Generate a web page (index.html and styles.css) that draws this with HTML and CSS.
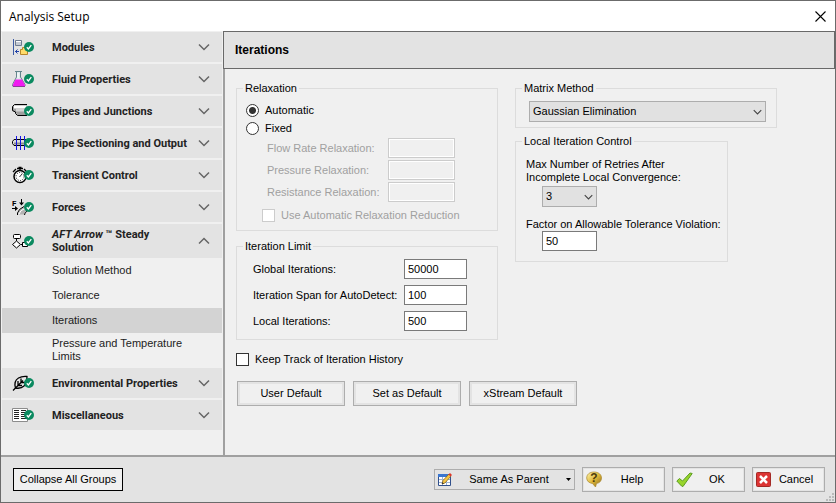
FILE: index.html
```html
<!DOCTYPE html>
<html lang="en">
<head>
    <meta charset="UTF-8">
    <meta name="viewport" content="width=device-width, initial-scale=1.0">
    <title>Analysis Setup</title>
    <link rel="stylesheet" href="styles.css">
</head>
<body>
    <svg class="defs" aria-hidden="true">
        <symbol id="check" viewBox="0 0 10 10">
            <circle cx="5" cy="5" r="5" fill="#0b8a60"/>
            <path d="M2.8 5.2l1.6 1.7 2.9-3.8" fill="none" stroke="#fff" stroke-width="1.3"/>
        </symbol>
        <symbol id="chevron" viewBox="0 0 12 8">
            <path d="M1 1.5l5 5 5-5" fill="none" stroke="currentColor" stroke-width="1.5"/>
        </symbol>
    </svg>

    <div class="window">
        <header class="title-bar">
            <span>Analysis Setup</span>
            <button class="close-button" aria-label="Close">
                <svg width="11" height="11" viewBox="0 0 11 11"><path d="M.5.5l10 10M10.5.5l-10 10" stroke="#000" stroke-width="1.1"/></svg>
            </button>
        </header>

        <div class="window-body">
            <nav class="sidebar">
                <button class="group">
                    <svg class="group-icon" viewBox="0 0 24 18">
                        <path d="M2.5 1v16" stroke="#3c5ba5"/>
                        <path d="M4.5 2.5h6v5h-6z" fill="#c4cad4" stroke="#6e7b90"/>
                        <path d="M5 3.5h5" stroke="#fff"/>
                        <path d="M9.5 16.5v-5h2v-2h5v7z" fill="#ffdc6a" stroke="#b8862b"/>
                        <path d="M4 13.5h4M6.5 11.5l-2 2 2 2" fill="none" stroke="#2142a8"/>
                        <use href="#check" x="13" y="4" width="10" height="10"/>
                    </svg>
                    <span class="group-name">Modules</span>
                    <svg class="chevron"><use href="#chevron"/></svg>
                </button>
                <button class="group">
                    <svg class="group-icon" viewBox="0 0 24 18">
                        <path d="M5.5 2v5L1.5 14.5V16H14v-1.500L9.500 7V2" fill="#dfe9ec" stroke="#64858c"/>
                        <path d="M4.5 9.5H11l3 5.500v1H1.800v-1z" fill="#f01cf0"/>
                        <path d="M4 1.5h7" stroke="#64858c"/>
                        <path d="M7 3v5" stroke="#fff"/>
                        <path d="M2 16.5h12" stroke="#8a3c96"/>
                        <use href="#check" x="13" y="4" width="10" height="10"/>
                    </svg>
                    <span class="group-name">Fluid Properties</span>
                    <svg class="chevron"><use href="#chevron"/></svg>
                </button>
                <button class="group">
                    <svg class="group-icon" viewBox="0 0 24 18">
                        <path d="M1.5 4.5l2-2h12v11h-9l-2-3-3-1z" fill="#a0a0a0"/>
                        <path d="M3 3.5h12v3H3z" fill="#fff"/>
                        <path d="M5 6.5h11v3H5z" fill="#d4d4d4"/>
                        <path d="M16 2.5H3.5l-2 2v4l3 1.500v1.500l2 2H16" fill="none" stroke="#000"/>
                        <use href="#check" x="13" y="4" width="10" height="10"/>
                    </svg>
                    <span class="group-name">Pipes and Junctions</span>
                    <svg class="chevron"><use href="#chevron"/></svg>
                </button>
                <button class="group">
                    <svg class="group-icon" viewBox="0 0 24 18">
                        <path d="M3 5.5h13v6H3l-1.500-2v-2z" fill="#ddd" stroke="#000"/>
                        <path d="M3 8.5h13v2H3z" fill="#8c8c8c"/>
                        <path d="M5.5 2v14M9.5 2v14M13.5 2v14" stroke="#1414e6"/>
                        <use href="#check" x="13" y="4" width="10" height="10"/>
                    </svg>
                    <span class="group-name">Pipe Sectioning and Output</span>
                    <svg class="chevron"><use href="#chevron"/></svg>
                </button>
                <button class="group">
                    <svg class="group-icon" viewBox="0 0 24 18">
                        <circle cx="9" cy="10.5" r="6" fill="#fff" stroke="#000" stroke-width="1.5"/>
                        <circle cx="9" cy="10.5" r="4" fill="none" stroke="#000" stroke-dasharray="1 1.5"/>
                        <path d="M6 2.5h6M7.5 1.5h3M9 3v2M2 6l3-3M13 3l3 3" stroke="#000" stroke-width="1.3"/>
                        <path d="M8.5 11l2.500-3" stroke="#333"/>
                        <use href="#check" x="13" y="4" width="10" height="10"/>
                    </svg>
                    <span class="group-name">Transient Control</span>
                    <svg class="chevron"><use href="#chevron"/></svg>
                </button>
                <button class="group">
                    <svg class="group-icon" viewBox="0 0 24 18">
                        <text class="force-letter" x="1" y="8">F</text>
                        <path d="M10.5 1v5M1 10.5h4" stroke="#000"/>
                        <path d="M8 4.5h5l-2.500 3zM4 8l3 2.500L4 13z" fill="#000"/>
                        <path d="M7.5 16.5v-2q1-4 6.500-5.500l3 3q-4 1-4 4.500z" fill="#b4b4b4"/>
                        <path d="M8 16q1-4 6-5.500" fill="none" stroke="#fff"/>
                        <path d="M6.5 17v-2q1-4 6.500-6.500M13.500 17q0-3 3-4" fill="none" stroke="#000"/>
                        <use href="#check" x="13" y="4" width="10" height="10"/>
                    </svg>
                    <span class="group-name">Forces</span>
                    <svg class="chevron"><use href="#chevron"/></svg>
                </button>
                <button class="group group-open" aria-expanded="true">
                    <svg class="group-icon" viewBox="0 0 24 18">
                        <rect x="2.5" y="2.5" width="7" height="4" rx="1" fill="#fff" stroke="#000"/>
                        <path d="M5.5 7v2M10 12.5h2" stroke="#000"/>
                        <path d="M5.5 9l4 3.500-4 3.500-4-3.500z" fill="#fff" stroke="#000"/>
                        <path d="M11.5 10.5h5v4h-5z" fill="#fff" stroke="#000"/>
                        <use href="#check" x="13" y="4" width="10" height="10"/>
                    </svg>
                    <span class="group-name"><i>AFT Arrow</i> ™ Steady<br>Solution</span>
                    <svg class="chevron chevron-up"><use href="#chevron"/></svg>
                </button>
                <ul class="pages">
                    <li><a class="page" href="#">Solution Method</a></li>
                    <li><a class="page" href="#">Tolerance</a></li>
                    <li><a class="page page-current" href="#" aria-current="page">Iterations</a></li>
                    <li><a class="page page-long" href="#">Pressure and Temperature Limits</a></li>
                </ul>
                <button class="group">
                    <svg class="group-icon" viewBox="0 0 24 18">
                        <path d="M4.5 14Q2.5 7 7.5 4 11 2 16 2.5q0 6-3 9.500-3 3-8.500 2z" fill="#e6e6e6" stroke="#000" stroke-width="1.3"/>
                        <path d="M2 16.5l3-3 7-7M7 7v4.500h4M10 4.500v4h4" fill="none" stroke="#000" stroke-width="1.3"/>
                        <use href="#check" x="13" y="4" width="10" height="10"/>
                    </svg>
                    <span class="group-name">Environmental Properties</span>
                    <svg class="chevron"><use href="#chevron"/></svg>
                </button>
                <button class="group">
                    <svg class="group-icon" viewBox="0 0 24 18">
                        <path d="M1.5 2.5h15v13h-15z" fill="#fff" stroke="#8c8c8c"/>
                        <path d="M3 4.5h5M3 6.5h5M3 8.5h5M3 10.5h5M3 12.5h5M10 4.5h5M10 6.5h5M10 8.5h5M10 10.5h5M10 12.5h5" stroke="#222"/>
                        <use href="#check" x="13" y="4" width="10" height="10"/>
                    </svg>
                    <span class="group-name">Miscellaneous</span>
                    <svg class="chevron"><use href="#chevron"/></svg>
                </button>
            </nav>

            <main class="content">
                <h1 class="page-title">Iterations</h1>
                <div class="settings">
                    <div class="column">
                        <fieldset class="relaxation">
                            <legend>Relaxation</legend>
                            <label class="option"><input type="radio" name="relaxation" checked> Automatic</label>
                            <label class="option"><input type="radio" name="relaxation"> Fixed</label>
                            <div class="fixed-values">
                                <label for="flow-rate">Flow Rate Relaxation:</label>
                                <input id="flow-rate" type="text" disabled>
                                <label for="pressure">Pressure Relaxation:</label>
                                <input id="pressure" type="text" disabled>
                                <label for="resistance">Resistance Relaxation:</label>
                                <input id="resistance" type="text" disabled>
                            </div>
                            <label class="option option-disabled"><input type="checkbox" disabled> Use Automatic Relaxation Reduction</label>
                        </fieldset>

                        <fieldset class="limits">
                            <legend>Iteration Limit</legend>
                            <div class="limit-values">
                                <label for="global">Global Iterations:</label>
                                <input id="global" type="text" value="50000">
                                <label for="span">Iteration Span for AutoDetect:</label>
                                <input id="span" type="text" value="100">
                                <label for="local">Local Iterations:</label>
                                <input id="local" type="text" value="500">
                            </div>
                        </fieldset>

                        <label class="option history"><input type="checkbox"> Keep Track of Iteration History</label>

                        <div class="defaults">
                            <button class="button">User Default</button>
                            <button class="button">Set as Default</button>
                            <button class="button">xStream Default</button>
                        </div>
                    </div>

                    <div class="column">
                        <fieldset class="matrix">
                            <legend>Matrix Method</legend>
                            <div class="select-box">
                                <select aria-label="Matrix Method">
                                    <option>Gaussian Elimination</option>
                                </select>
                                <svg class="chevron"><use href="#chevron"/></svg>
                            </div>
                        </fieldset>

                        <fieldset class="local-control">
                            <legend>Local Iteration Control</legend>
                            <label for="retries">Max Number of Retries After<br>Incomplete Local Convergence:</label>
                            <div class="select-box">
                                <select id="retries">
                                    <option>3</option>
                                </select>
                                <svg class="chevron"><use href="#chevron"/></svg>
                            </div>
                            <label for="factor">Factor on Allowable Tolerance Violation:</label>
                            <input id="factor" type="text" value="50">
                        </fieldset>
                    </div>
                </div>
            </main>
        </div>

        <footer class="actions">
            <button class="collapse-button">Collapse All Groups</button>
            <button class="action same-button">
                <svg width="14" height="14" viewBox="0 0 14 14">
                    <path d="M.5 2.5h12v10H.5z" fill="#fff" stroke="#31508c"/>
                    <path d="M0 1h13v3H0z" fill="#3a76d0"/>
                    <path d="M1 6.5h11M1 9.5h11M4.5 4v8M8.5 4v8" stroke="#9fb4d2"/>
                    <path d="M4 11l1-3.500 6-6.500 2 2-6 7z" fill="#f6c544" stroke="#7d5b13" stroke-width=".7"/>
                    <path d="M10.5 1.5L12 0l2 2-1.500 1.500z" fill="#e03628"/>
                    <path d="M4 11l.5-1.800L6 10.500z" fill="#222"/>
                </svg>
                <span class="action-name">Same As Parent</span>
                <svg width="5" height="3" viewBox="0 0 5 3"><path d="M0 0h5L2.5 3z"/></svg>
            </button>
            <button class="action help-button">
                <svg width="17" height="17" viewBox="0 0 17 17">
                    <defs>
                        <linearGradient id="gold" x1="0" y1="0" x2="1" y2="1">
                            <stop offset="0" stop-color="#fff6b0"/>
                            <stop offset=".5" stop-color="#dfb83a"/>
                            <stop offset="1" stop-color="#8a681b"/>
                        </linearGradient>
                    </defs>
                    <path d="M8 1c4.500 0 7.500 2.500 7.500 6 0 3-2 5-5 5.500L9.500 16l-3-3.500C3 12 .7 10 .7 7 .7 3.500 3.500 1 8 1z" fill="url(#gold)" stroke="#a8862e" stroke-width=".7"/>
                    <text class="help-mark" x="8" y="11" text-anchor="middle">?</text>
                </svg>
                <span class="action-name">Help</span>
            </button>
            <button class="action ok-button">
                <svg width="17" height="17" viewBox="0 0 17 17">
                    <path d="M.8 10l2.700-2.500L6.500 10 14 2l2.200.5L7 15.500 5.500 15z" fill="#98d52c" stroke="#5c9c22"/>
                </svg>
                <span class="action-name">OK</span>
            </button>
            <button class="action cancel-button">
                <svg width="15" height="15" viewBox="0 0 15 15">
                    <rect x=".5" y=".5" width="14" height="14" rx="1" fill="#dc3434" stroke="#a32a26"/>
                    <path d="M4 4l7 7M11 4l-7 7" stroke="#fff" stroke-width="2.5"/>
                </svg>
                <span class="action-name">Cancel</span>
            </button>
            <svg class="grip" width="9" height="9" viewBox="0 0 9 9"><path d="M6 0h2v2H6zM6 3h2v2H6zM6 6h2v2H6zM3 3h2v2H3zM3 6h2v2H3zM0 6h2v2H0z" fill="#bababa"/></svg>
        </footer>
    </div>
</body>
</html>
```

FILE: styles.css
```css
* {
    box-sizing: border-box;
}

body {
    margin: 0;
    font-family: "Liberation Sans", Arial, sans-serif;
    font-size: 11px;
    line-height: 13px;
    color: #000;
}

button, input, select {
    margin: 0;
    font: inherit;
    color: inherit;
    border-radius: 0;
}

.defs {
    display: none;
}

.window {
    display: flex;
    flex-direction: column;
    min-height: 100vh;
    border: 1px solid #6b6b6b;
    background-color: #f0f0f0;
}

/* Title bar */
.title-bar {
    display: flex;
    justify-content: space-between;
    align-items: center;
    height: 30px;
    padding-left: 8px;
    background-color: #fff;
    font-family: "Open Sans", sans-serif;
    font-size: 12px;
}

.close-button {
    display: flex;
    align-items: center;
    height: 100%;
    padding: 0 9px;
    border: none;
    background: none;
}

.window-body {
    display: flex;
    flex: 1;
}

/* Sidebar */
.sidebar {
    display: flex;
    flex-direction: column;
    width: 222px;
    padding: 1px 0 0 1px;
    border-right: 1px solid #f0f0f0;
}

.group {
    display: flex;
    align-items: center;
    min-height: 30px;
    padding: 0 12px 0 9px;
    margin-bottom: 2px;
    border: none;
    background-color: #e3e3e3;
    color: #222;
    font-family: Roboto, Arial, sans-serif;
    font-weight: bold;
    text-align: left;
    white-space: nowrap;
}

.group-open {
    min-height: 34px;
    margin-bottom: 0;
}

.group-icon {
    flex: none;
    width: 24px;
    height: 18px;
}

.group-name {
    flex: 1;
    padding-left: 17px;
}

.force-letter {
    font-size: 8px;
    font-weight: bold;
}

.chevron {
    flex: none;
    width: 12px;
    height: 8px;
    color: #666;
}

.chevron-up {
    transform: rotate(180deg);
}

.pages {
    margin: 0;
    padding: 0;
    list-style: none;
}

.page {
    display: block;
    padding: 6px 20px 6px 50px;
    color: #222;
    text-decoration: none;
}

.page-current {
    background-color: #d3d3d3;
}

.page-long {
    padding-top: 4px;
    padding-bottom: 5px;
}

/* Content */
.content {
    flex: 1;
    border-left: 2px solid #a0a0a0;
}

.page-title {
    margin: 0 0 0 -2px;
    padding: 12px 11px 11px;
    border: 1px solid #696969;
    background-color: #e3e3e3;
    font-size: 12px;
}

.settings {
    display: flex;
    gap: 17px;
    padding: 13px 11px;
}

.column {
    display: flex;
    flex-direction: column;
    align-items: flex-start;
}

fieldset {
    margin: 0;
    padding: 6px;
    border: 1px solid #dcdcdc;
}

legend {
    padding: 0 2px;
}

input[type="text"] {
    height: 20px;
    padding: 0 3px;
    border: 1px solid #7a7a7a;
    background-color: #fff;
}

input[type="text"]:disabled {
    border-color: #ccc;
    background-color: #f0f0f0;
    box-shadow: inset 0 0 0 1px #fff;
}

input[type="radio"], input[type="checkbox"] {
    appearance: none;
    width: 13px;
    height: 13px;
    border: 1px solid #333;
    background-color: #fff;
}

input[type="radio"] {
    border-radius: 50%;
}

input[type="radio"]:checked {
    background-image: radial-gradient(circle, #333 3px, transparent 4px);
}

input[type="checkbox"]:disabled {
    border-color: #ccc;
}

.option {
    display: flex;
    align-items: center;
    gap: 6px;
    height: 18px;
}

.relaxation .option {
    padding-left: 3px;
}

.relaxation .option-disabled {
    padding-left: 19px;
    color: #a0a0a0;
}

.relaxation {
    width: 262px;
}

.fixed-values {
    display: grid;
    grid-template-columns: 121px 67px;
    row-gap: 2px;
    align-items: center;
    padding: 1px 0 4px 24px;
    color: #a0a0a0;
}

.limits {
    width: 262px;
    margin-top: 9px;
}

.limit-values {
    display: grid;
    grid-template-columns: 151px 63px;
    row-gap: 6px;
    align-items: center;
    padding: 0 0 2px 10px;
}

.history {
    margin-top: 10px;
}

.defaults {
    display: flex;
    gap: 8px;
    margin-top: 13px;
    margin-right: -80px;
    padding-left: 1px;
}

.button {
    width: 108px;
    height: 25px;
    border: 1px solid #adadad;
    background-color: #f0f0f0;
    box-shadow: inset 0 0 0 2px #e3e3e3;
}

.select-box {
    display: grid;
    align-items: center;
}

.select-box select, .select-box .chevron {
    grid-area: 1 / 1;
}

.select-box select {
    appearance: none;
    height: 21px;
    padding: 0 3px;
    border: 1px solid #adadad;
    background-color: #e1e1e1;
}

.select-box .chevron {
    justify-self: end;
    width: 9px;
    height: 6px;
    margin-right: 4px;
    color: #444;
    pointer-events: none;
}

.matrix {
    width: 262px;
    padding-bottom: 5px;
}

.matrix .select-box {
    margin: 0 4px 0 7px;
}

.local-control {
    width: 212px;
    margin-top: 7px;
    padding: 10px 6px;
}

.local-control label {
    display: block;
    margin-left: 4px;
    white-space: nowrap;
}

.local-control .select-box, .local-control input {
    width: 55px;
    margin-left: 20px;
}

.local-control .select-box {
    margin-top: 2px;
    margin-bottom: 11px;
}

.local-control input {
    display: block;
}

/* Bottom buttons */
.actions {
    display: flex;
    align-items: center;
    height: 47px;
    padding-left: 12px;
    border-top: 2px solid #a0a0a0;
    background-color: #e3e3e3;
}

.collapse-button {
    height: 23px;
    width: 110px;
    padding: 0;
    margin-right: auto;
    border: 1px solid #000;
    background-color: #f0f0f0;
}

.action {
    display: flex;
    align-items: center;
    height: 25px;
    padding: 0 3px;
    margin-right: 7px;
    border: 1px solid #adadad;
    background-color: #f0f0f0;
    box-shadow: inset 0 0 0 1px #e3e3e3;
}

.action-name {
    flex: 1;
    text-align: center;
}

.same-button {
    width: 141px;
    height: 21px;
    background-color: #e3e3e3;
}

.help-button {
    width: 83px;
}

.ok-button {
    width: 73px;
}

.cancel-button {
    width: 73px;
    margin-right: 0;
}

.help-mark {
    font-size: 12px;
    font-weight: bold;
    fill: #4c3a0c;
}

.grip {
    align-self: flex-end;
    margin-left: 1px;
}
```
